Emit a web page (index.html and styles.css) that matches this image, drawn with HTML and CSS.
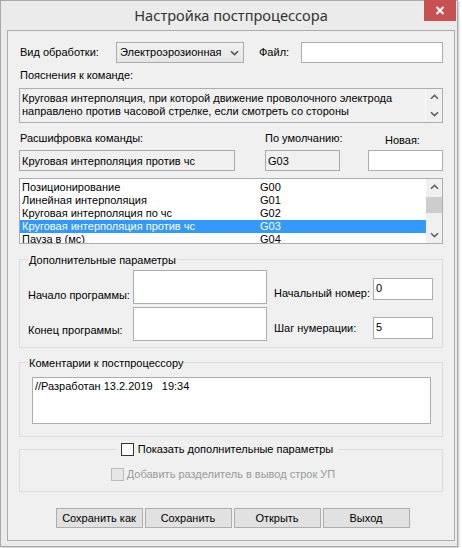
FILE: index.html
```html
<!DOCTYPE html>
<html lang="ru">
<head>
<meta charset="utf-8">
<title>Настройка постпроцессора</title>
<link rel="stylesheet" href="styles.css">
</head>
<body>
<div class="window">
  <div class="titlebar">
    <div class="title">Настройка постпроцессора</div>
    <div class="close">
      <svg width="10" height="9" viewBox="0 0 10 9"><path d="M1.5 1 L8.5 8 M8.5 1 L1.5 8" stroke="#fff" stroke-width="2" fill="none"/></svg>
    </div>
  </div>
  <div class="client">
    <div class="row-top">
      <span class="lbl-vid">Вид обработки:</span>
      <div class="combo">
        <span>Электроэрозионная</span>
        <svg width="9" height="6" viewBox="0 0 9 6"><path d="M1 1.2 L4.5 4.6 L8 1.2" stroke="#555" stroke-width="1.6" fill="none"/></svg>
      </div>
      <span class="lbl-file">Файл:</span>
      <div class="field white file-field"></div>
    </div>

    <div class="desc-lbl">Пояснения к команде:</div>
    <div class="desc">
      <div class="desc-text">Круговая интерполяция, при которой движение проволочного электрода<br>направлено против часовой стрелке, если смотреть со стороны</div>
      <div class="vscroll">
        <div class="sbtn"><svg width="9" height="6" viewBox="0 0 9 6"><path d="M1 4.8 L4.5 1.4 L8 4.8" stroke="#606060" stroke-width="1.6" fill="none"/></svg></div>
        <div class="sbtn"><svg width="9" height="6" viewBox="0 0 9 6"><path d="M1 1.2 L4.5 4.6 L8 1.2" stroke="#606060" stroke-width="1.6" fill="none"/></svg></div>
      </div>
    </div>

    <div class="heads">
      <span class="h1">Расшифровка команды:</span>
      <span class="h2">По умолчанию:</span>
      <span class="h3">Новая:</span>
    </div>
    <div class="fields">
      <div class="field ro f1">Круговая интерполяция против чс</div>
      <div class="field ro f2">G03</div>
      <div class="field white f3"></div>
    </div>

    <div class="list">
      <div class="items">
        <div class="item"><span class="name">Позиционирование</span><span>G00</span></div>
        <div class="item"><span class="name">Линейная интерполяция</span><span>G01</span></div>
        <div class="item"><span class="name">Круговая интерполяция по чс</span><span>G02</span></div>
        <div class="item sel"><span class="name">Круговая интерполяция против чс</span><span>G03</span></div>
        <div class="item"><span class="name">Пауза в (мс)</span><span>G04</span></div>
      </div>
      <div class="vscroll list-scroll">
        <div class="sbtn"><svg width="9" height="6" viewBox="0 0 9 6"><path d="M1 4.8 L4.5 1.4 L8 4.8" stroke="#606060" stroke-width="1.6" fill="none"/></svg></div>
        <div class="track"><div class="thumb"></div></div>
        <div class="sbtn"><svg width="9" height="6" viewBox="0 0 9 6"><path d="M1 1.2 L4.5 4.6 L8 1.2" stroke="#606060" stroke-width="1.6" fill="none"/></svg></div>
      </div>
    </div>

    <div class="group g-params">
      <div class="gtitle">Дополнительные параметры</div>
      <div class="params">
        <span class="pl pl1">Начало программы:</span>
        <div class="field white area"></div>
        <span class="pr pr1">Начальный номер:</span>
        <div class="field white num n1">0</div>
        <span class="pl pl2">Конец программы:</span>
        <div class="field white area"></div>
        <span class="pr pr2">Шаг нумерации:</span>
        <div class="field white num n2">5</div>
      </div>
    </div>

    <div class="group g-comments">
      <div class="gtitle">Коментарии к постпроцессору</div>
      <div class="field white comment">//Разработан 13.2.2019&nbsp;&nbsp; 19:34</div>
    </div>

    <div class="group g-extra">
      <div class="gtitle chk-title"><span class="chk"></span><span>Показать дополнительные параметры</span></div>
      <div class="chk-row"><span class="chk disabled"></span><span class="dis-text">Добавить разделитель в вывод строк УП</span></div>
    </div>

    <div class="buttons">
      <div class="btn">Сохранить как</div>
      <div class="btn">Сохранить</div>
      <div class="btn">Открыть</div>
      <div class="btn">Выход</div>
    </div>
  </div>
</div>
</body>
</html>
```

FILE: styles.css
```css
* { box-sizing: border-box; }
html, body { margin: 0; padding: 0; }
body {
  width: 462px;
  height: 548px;
  background: #ffffff;
  font-family: "Liberation Sans", Arial, sans-serif;
  font-size: 11px;
  line-height: 13px;
  color: #000;
  overflow: hidden;
}
.window {
  width: 458px;
  height: 547px;
  background: #ebebeb;
  border: 1px solid #a9a9a9;
  box-shadow: 1px 1px 2px rgba(0,0,0,0.25);
}
.titlebar {
  height: 29px;
  display: grid;
  grid-template-columns: 1fr auto 1fr;
  align-items: start;
}
.title {
  grid-column: 2;
  padding-left: 4px;
  font-family: "Noto Sans", "Open Sans", sans-serif;
  font-size: 14.6px;
  line-height: 29px;
  color: #333;
}
.close {
  grid-column: 3;
  justify-self: end;
  width: 32px;
  height: 21px;
  margin-top: -1px;
  margin-right: 1px;
  background: #c75050;
  display: flex;
  align-items: center;
  justify-content: center;
}
.client {
  margin: 0 2px 0 6px;
  height: 511px;
  border: 1px solid #acacac;
  background: #f0f0f0;
  padding: 11px 11px 0 11px;
}
.field {
  border: 1px solid #abadb3;
  height: 21px;
}
.white { background: #fff; }
.ro {
  background: #f0f0f0;
  border-color: #a9a9a9;
  padding: 4px 2px 0;
}
.row-top {
  display: flex;
  align-items: center;
  height: 21px;
}
.lbl-vid { width: 97px; padding-left: 1px; }
.combo {
  width: 128px;
  height: 21px;
  border: 1px solid #acacac;
  background: linear-gradient(#f2f2f2, #e5e5e5);
  display: flex;
  align-items: center;
  justify-content: space-between;
  padding: 0 4px 0 3px;
}
.lbl-file { width: 42px; margin-left: 15px; }
.file-field { width: 142px; }

.desc-lbl { margin-top: 6px; padding-left: 1px; }
.desc {
  margin-top: 6px;
  height: 35px;
  border: 1px solid #abadb3;
  display: flex;
}
.desc-text { flex: 1; padding: 3px 2px 0; }
.vscroll {
  width: 17px;
  display: flex;
  flex-direction: column;
  justify-content: space-between;
  border-left: 1px solid #fafafa;
}
.sbtn {
  height: 16px;
  display: flex;
  align-items: center;
  justify-content: center;
}

.heads {
  margin-top: 9px;
  height: 13px;
  display: grid;
  grid-template-columns: 246px 103px 75px;
}
.h1 { padding-left: 1px; }
.h3 { padding-left: 17px; padding-top: 2px; }
.fields {
  margin-top: 5px;
  display: grid;
  grid-template-columns: 216px 30px 75px 28px 75px;
}
.f1 { grid-column: 1; }
.f2 { grid-column: 3; }
.f3 { grid-column: 5; }

.list {
  margin-top: 7px;
  height: 66px;
  border: 1px solid #abadb3;
  background: #fff;
  display: flex;
}
.items { flex: 1; padding-top: 2px; overflow: hidden; }
.item { display: flex; height: 13px; padding-left: 2px; }
.item .name { width: 238px; }
.item.sel { background: #3399ff; color: #fff; }
.list-scroll { width: 16px; background: #f0f0f0; border-left: none; }
.track { flex: 1; padding-top: 2px; }
.thumb { height: 16px; background: #cdcdcd; }

.group { border: 1px solid #dcdcdc; }
.gtitle {
  width: fit-content;
  margin-top: -6px;
  margin-left: 8px;
  padding: 0 1px;
  background: #f0f0f0;
  line-height: 13px;
}
.g-params { margin-top: 15px; padding-bottom: 6px; }
.params {
  margin-top: 3px;
  margin-left: 8px;
  display: grid;
  grid-template-columns: 105px 134px 106px 60px;
  grid-template-rows: 34px 34px;
  row-gap: 3px;
}
.area { height: 34px; }
.pl { align-self: end; }
.pl1 { margin-bottom: 2px; }
.pl2 { margin-bottom: 4px; }
.pr { padding-left: 7px; }
.pr1 { margin-top: 17px; }
.pr2 { margin-top: 15px; }
.num { height: 22px; padding: 3px 2px 0; }
.n1 { margin-top: 8px; }
.n2 { margin-top: 10px; }

.g-comments { margin-top: 14px; padding-bottom: 12px; }
.comment {
  margin: 7px 11px 0 12px;
  height: 47px;
  padding: 2px 2px 0;
}

.g-extra { margin-top: 12px; padding: 0 8px 10px 0; }
.chk-title {
  margin: -8px auto 0;
  padding: 0 5px;
  display: flex;
  align-items: center;
  gap: 4px;
  line-height: 14px;
}
.chk {
  width: 13px;
  height: 13px;
  border: 1px solid #333;
  background: #fff;
  flex: none;
}
.chk.disabled { border-color: #bcbcbc; background: #e6e6e6; }
.chk-row {
  margin-top: 11px;
  display: flex;
  align-items: center;
  justify-content: center;
  gap: 3px;
  line-height: 14px;
  padding-right: 8px;
}
.dis-text { color: #9a9a9a; }

.buttons {
  margin-top: 16px;
  padding-left: 3px;
  display: flex;
  justify-content: center;
  gap: 2px;
}
.btn {
  width: 87px;
  height: 20px;
  border: 1px solid #adadad;
  background: #e1e1e1;
  display: flex;
  align-items: center;
  justify-content: center;
}
```
